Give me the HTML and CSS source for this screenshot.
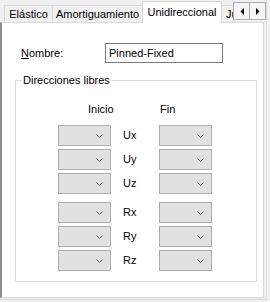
FILE: index.html
```html
<!DOCTYPE html>
<html lang="es">
<head>
    <meta charset="UTF-8">
    <title>Unidireccional</title>
    <link rel="stylesheet" href="styles.css">
</head>
<body>
<div class="frame">
    <div class="tabbar">
        <div class="tabs">
            <div class="tab tab-elastico">Elástico</div>
            <div class="tab tab-amort">Amortiguamiento</div>
            <div class="tab tab-uni active">Unidireccional</div>
            <div class="tab tab-juntas">Juntas</div>
        </div>
        <div class="scroll">
            <div class="scroll-btn">
                <svg width="4" height="7" viewBox="0 0 4 7"><polygon points="4,0 4,7 0.5,3.5" fill="#000"/></svg>
            </div>
            <div class="scroll-btn">
                <svg width="4" height="7" viewBox="0 0 4 7"><polygon points="0,0 0,7 3.5,3.5" fill="#000"/></svg>
            </div>
        </div>
    </div>

    <div class="panel">
        <div class="name-row">
            <label class="name-label"><u>N</u>ombre:</label>
            <div class="name-input">Pinned-Fixed</div>
        </div>

        <fieldset class="group">
            <legend>Direcciones libres</legend>
            <div class="grid">
                <div class="head head-inicio">Inicio</div>
                <div class="head"></div>
                <div class="head head-fin">Fin</div>

                <div class="combo"><svg width="7" height="4" viewBox="0 0 7 4"><polyline points="0.5,0.5 3.5,3.5 6.5,0.5" fill="none" stroke="#606060"/></svg></div>
                <div class="axis">Ux</div>
                <div class="combo"><svg width="7" height="4" viewBox="0 0 7 4"><polyline points="0.5,0.5 3.5,3.5 6.5,0.5" fill="none" stroke="#606060"/></svg></div>

                <div class="combo"><svg width="7" height="4" viewBox="0 0 7 4"><polyline points="0.5,0.5 3.5,3.5 6.5,0.5" fill="none" stroke="#606060"/></svg></div>
                <div class="axis">Uy</div>
                <div class="combo"><svg width="7" height="4" viewBox="0 0 7 4"><polyline points="0.5,0.5 3.5,3.5 6.5,0.5" fill="none" stroke="#606060"/></svg></div>

                <div class="combo"><svg width="7" height="4" viewBox="0 0 7 4"><polyline points="0.5,0.5 3.5,3.5 6.5,0.5" fill="none" stroke="#606060"/></svg></div>
                <div class="axis">Uz</div>
                <div class="combo"><svg width="7" height="4" viewBox="0 0 7 4"><polyline points="0.5,0.5 3.5,3.5 6.5,0.5" fill="none" stroke="#606060"/></svg></div>

                <div class="combo sep"><svg width="7" height="4" viewBox="0 0 7 4"><polyline points="0.5,0.5 3.5,3.5 6.5,0.5" fill="none" stroke="#606060"/></svg></div>
                <div class="axis sep">Rx</div>
                <div class="combo sep"><svg width="7" height="4" viewBox="0 0 7 4"><polyline points="0.5,0.5 3.5,3.5 6.5,0.5" fill="none" stroke="#606060"/></svg></div>

                <div class="combo"><svg width="7" height="4" viewBox="0 0 7 4"><polyline points="0.5,0.5 3.5,3.5 6.5,0.5" fill="none" stroke="#606060"/></svg></div>
                <div class="axis">Ry</div>
                <div class="combo"><svg width="7" height="4" viewBox="0 0 7 4"><polyline points="0.5,0.5 3.5,3.5 6.5,0.5" fill="none" stroke="#606060"/></svg></div>

                <div class="combo"><svg width="7" height="4" viewBox="0 0 7 4"><polyline points="0.5,0.5 3.5,3.5 6.5,0.5" fill="none" stroke="#606060"/></svg></div>
                <div class="axis">Rz</div>
                <div class="combo"><svg width="7" height="4" viewBox="0 0 7 4"><polyline points="0.5,0.5 3.5,3.5 6.5,0.5" fill="none" stroke="#606060"/></svg></div>
            </div>
        </fieldset>
    </div>
</div>
</body>
</html>
```

FILE: styles.css
```css
* {
    box-sizing: border-box;
    margin: 0;
    padding: 0;
}

body {
    background: #f0f0f0;
    font-family: "Liberation Sans", Arial, sans-serif;
    font-size: 11px;
    color: #000;
}

svg {
    display: block;
}

.frame {
    width: 267px;
    height: 300px;
    border-right: 1px solid #dadada;
    border-bottom: 1px solid #dadada;
}

/* tab strip */
.tabbar {
    display: flex;
    height: 23px;
    margin-bottom: -1px;
    position: relative;
    z-index: 1;
}

.tabs {
    display: flex;
    align-items: flex-end;
    width: 235px;
    height: 23px;
    padding-left: 4px;
    overflow: hidden;
}

.tab {
    flex: none;
    height: 17px;
    margin-bottom: 1px;
    margin-left: -1px;
    border: 1px solid #d9d9d9;
    border-bottom: none;
    background: #f0f0f0;
    line-height: 16px;
    text-align: center;
    white-space: nowrap;
}

.tab:first-child {
    margin-left: 0;
}

.tab-elastico {
    width: 49px;
}

.tab-amort {
    width: 91px;
}

.tab-uni {
    width: 80px;
}

.tab-juntas {
    width: 40px;
    text-align: left;
    padding-left: 4px;
}

.tab.active {
    height: 22px;
    margin-bottom: 0;
    background: #fff;
    line-height: 20px;
    position: relative;
    z-index: 1;
}

.scroll {
    display: flex;
    padding-top: 2px;
}

.scroll-btn {
    width: 17px;
    height: 18px;
    margin-left: -1px;
    border: 1px solid #adadad;
    background: #f5f5f5;
    display: flex;
    align-items: center;
    justify-content: center;
}

.scroll-btn:first-child {
    margin-left: 0;
}

/* page */
.panel {
    width: 264px;
    height: 276px;
    background: #fff;
    border: 1px solid #d9d9d9;
    border-left: 2px solid #8c8c8c;
}

.name-row {
    display: flex;
    align-items: center;
    margin: 20px 0 0 19px;
}

.name-label {
    width: 84px;
}

.name-input {
    width: 118px;
    height: 20px;
    border: 1px solid #7a7a7a;
    padding-left: 3px;
    line-height: 18px;
}

.group {
    width: 242px;
    margin: 11px 0 0 13px;
    border: 1px solid #dcdcdc;
}

.group legend {
    margin-left: 6px;
    padding: 0 1px;
    line-height: 13px;
}

.grid {
    display: grid;
    grid-template-columns: 53px 48px 53px;
    row-gap: 3px;
    margin: 16px 0 10px 42px;
}

.head {
    line-height: 13px;
    margin-bottom: 6px;
}

.head-inicio {
    padding-left: 30px;
}

.head-fin {
    padding-left: 1px;
}

.combo {
    height: 21px;
    border: 1px solid #adadad;
    background: #e1e1e1;
    display: flex;
    align-items: center;
    justify-content: flex-end;
    padding-right: 7px;
}

.axis {
    line-height: 21px;
    padding-left: 12px;
}

.sep {
    margin-top: 5px;
}
```
